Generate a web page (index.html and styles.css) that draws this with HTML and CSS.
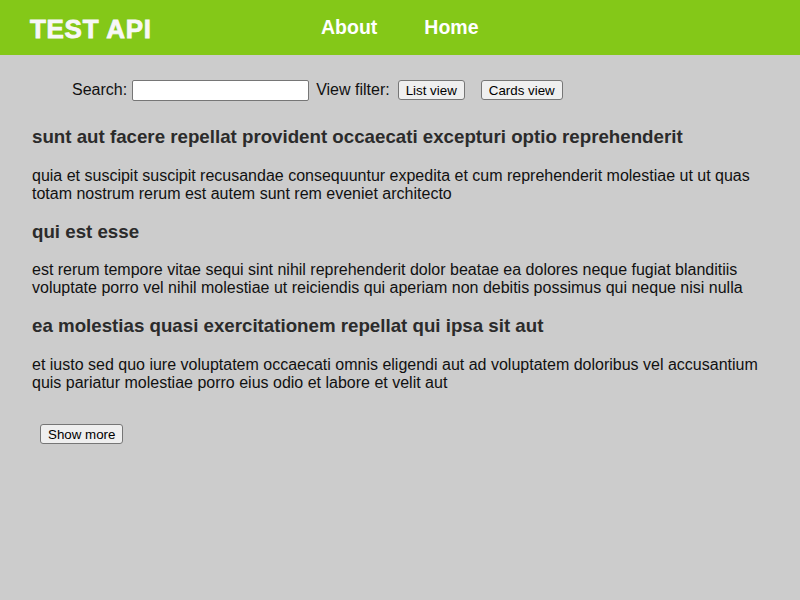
FILE: index.html
```html
<!DOCTYPE html>
<html>
<head>
<meta charset="utf-8">
<link rel="stylesheet" href="styles.css">
</head>
<body>
<header class="topbar">
  <div class="logo">TEST API</div>
  <nav class="nav">
    <a class="nav-link" href="#">About</a>
    <a class="nav-link" href="#">Home</a>
  </nav>
</header>
<main class="content">
  <div class="toolbar">
    <label class="label">Search:</label>
    <input class="search" type="text">
    <span class="label">View filter:</span>
    <button class="btn">List view</button>
    <button class="btn btn-cards">Cards view</button>
  </div>
  <section class="posts">
    <article class="post">
      <h3 class="post-title">sunt aut facere repellat provident occaecati excepturi optio reprehenderit</h3>
      <p class="post-body">quia et suscipit suscipit recusandae consequuntur expedita et cum reprehenderit molestiae ut ut quas totam nostrum rerum est autem sunt rem eveniet architecto</p>
    </article>
    <article class="post">
      <h3 class="post-title">qui est esse</h3>
      <p class="post-body">est rerum tempore vitae sequi sint nihil reprehenderit dolor beatae ea dolores neque fugiat blanditiis voluptate porro vel nihil molestiae ut reiciendis qui aperiam non debitis possimus qui neque nisi nulla</p>
    </article>
    <article class="post">
      <h3 class="post-title">ea molestias quasi exercitationem repellat qui ipsa sit aut</h3>
      <p class="post-body">et iusto sed quo iure voluptatem occaecati omnis eligendi aut ad voluptatem doloribus vel accusantium quis pariatur molestiae porro eius odio et labore et velit aut</p>
    </article>
  </section>
  <div class="more">
    <button class="btn">Show more</button>
  </div>
</main>
</body>
</html>
```

FILE: styles.css
```css
html, body {
  margin: 0;
  padding: 0;
  background: #cccccc;
  font-family: "Liberation Sans", Arial, sans-serif;
  color: #111;
}
.topbar {
  height: 55px;
  background: #84c818;
  display: flex;
  align-items: center;
}
.logo {
  margin-left: 30px;
  width: 291px;
  font-size: 26px;
  font-weight: bold;
  letter-spacing: 0.7px;
  color: #f7f7f7;
  -webkit-text-stroke: 0.8px #f7f7f7;
  padding-top: 3px;
}
.nav {
  display: flex;
  gap: 47px;
}
.nav-link {
  color: #fff;
  font-size: 19.5px;
  font-weight: bold;
  text-decoration: none;
}
.content {
  padding: 0 32px;
}
.toolbar {
  display: flex;
  align-items: center;
  margin-top: 24px;
  padding-left: 40px;
  font-size: 16px;
  height: 21px;
}
.label {
  color: #111;
}
.search {
  width: 171px;
  height: 17px;
  margin: 1px 7px 0 5px;
  padding: 1px 2px;
  border: 1px solid #767676;
  border-radius: 2px;
  background: #fff;
}
.btn {
  font-family: "Liberation Sans", Arial, sans-serif;
  font-size: 13.333px;
  color: #000;
  background: #efefef;
  border: 1px solid #767676;
  border-radius: 3px;
  padding: 1px 7px;
  height: 20px;
}
.toolbar .btn {
  margin-left: 8px;
  margin-top: 1px;
}
.toolbar .btn-cards {
  margin-left: 16px;
}
.posts {
  margin-top: 26px;
}
.post-title {
  font-size: 18.72px;
  font-weight: bold;
  color: #2b2b2b;
  margin: 0 0 18.72px;
}
.post-body {
  margin: 0 0 18px;
  font-size: 16px;
  line-height: 18px;
}
.more {
  margin-top: 32px;
  padding-left: 8px;
}
```
